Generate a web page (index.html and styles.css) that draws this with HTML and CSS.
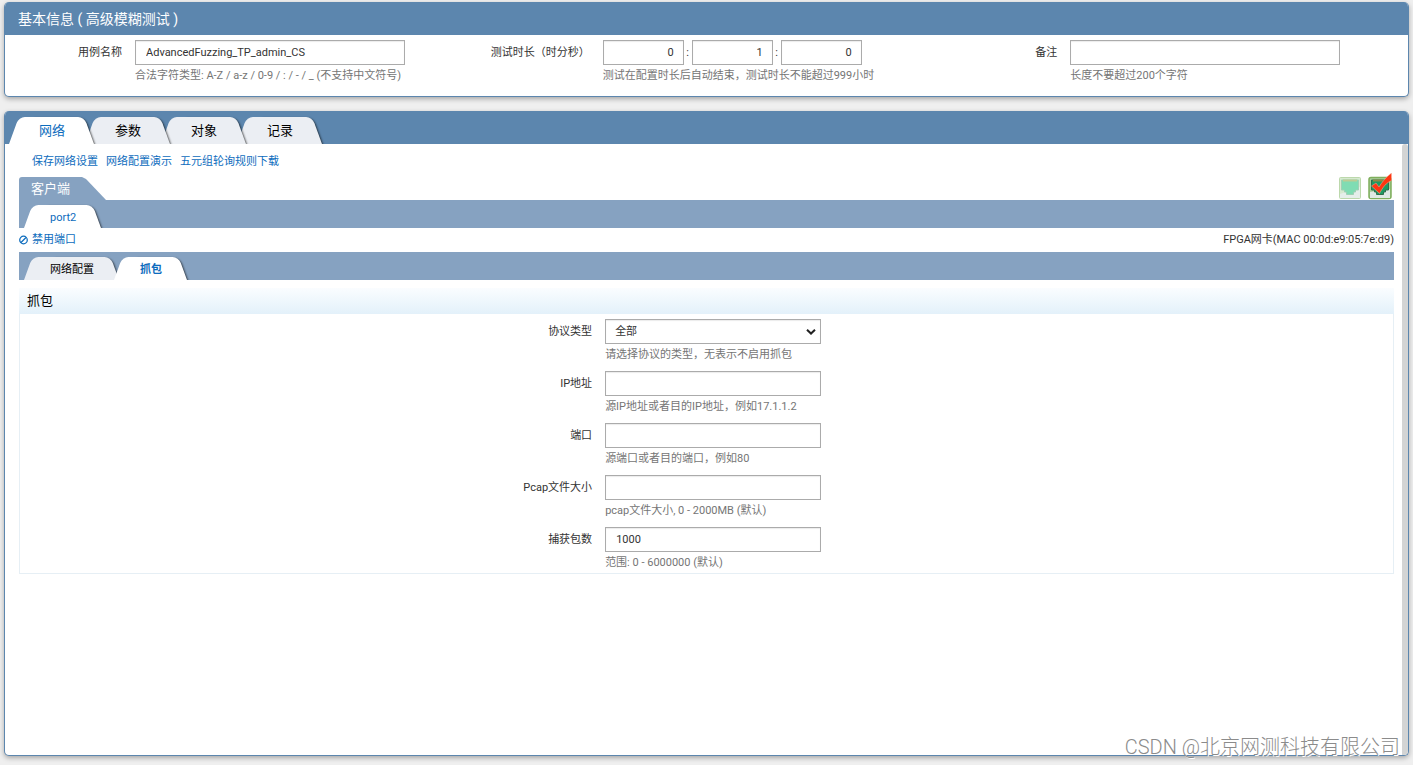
FILE: index.html
```html
<!DOCTYPE html>
<html lang="zh-CN">
<head>
<meta charset="utf-8">
<title>高级模糊测试</title>
<link rel="stylesheet" href="styles.css">
</head>
<body>
<section class="panel">
  <h1 class="panel-title">基本信息 ( 高级模糊测试 )</h1>
  <form class="info">
    <div class="info-field">
      <label class="label" for="case-name">用例名称</label>
      <div>
        <input class="box" id="case-name" type="text" value="AdvancedFuzzing_TP_admin_CS">
        <p class="hint">合法字符类型: A-Z / a-z / 0-9 / : / - / _ (不支持中文符号)</p>
      </div>
    </div>
    <div class="info-field">
      <label class="label" for="hours">测试时长（时分秒）</label>
      <div>
        <div class="duration">
          <input class="box number" id="hours" type="text" value="0"><span>:</span>
          <input class="box number" type="text" value="1" aria-label="分"><span>:</span>
          <input class="box number" type="text" value="0" aria-label="秒">
        </div>
        <p class="hint">测试在配置时长后自动结束，测试时长不能超过999小时</p>
      </div>
    </div>
    <div class="info-field">
      <label class="label" for="remark">备注</label>
      <div>
        <input class="box" id="remark" type="text">
        <p class="hint">长度不要超过200个字符</p>
      </div>
    </div>
  </form>
</section>

<section class="panel panel-main">
  <nav class="tabs tabs-top">
    <button class="tab active" type="button"><span>网络</span></button>
    <button class="tab" type="button"><span>参数</span></button>
    <button class="tab" type="button"><span>对象</span></button>
    <button class="tab" type="button"><span>记录</span></button>
  </nav>
  <div class="body">
    <main class="content">
      <div class="links">
        <a href="#">保存网络设置</a>
        <a href="#">网络配置演示</a>
        <a href="#">五元组轮询规则下载</a>
      </div>
      <div class="client-head">
        <h2 class="client-tab">客户端</h2>
        <div class="ports">
          <button class="port" type="button" aria-label="端口1">
            <svg width="24" height="27" viewBox="0 0 24 27">
              <rect x="1.500" y="4.500" width="21" height="21" rx="1" fill="#d6ead0" stroke="#bcd8ac"/>
              <path d="M2 21L22 14V25H2Z" fill="#e6eeea"/>
              <path d="M3.500 7H20.500V17H17.500V19H15.500V21.500H8.500V19H6.500V17H3.500Z" fill="#7fdcb3" stroke="#9fd0b4"/>
              <path d="M5 7.500H19" stroke="#bccb94" stroke-width="2"/>
            </svg>
          </button>
          <button class="port" type="button" aria-label="端口2">
            <svg width="24" height="27" viewBox="0 0 24 27">
              <rect x="1" y="4.500" width="22" height="21" rx="2" fill="#a9cf9c" stroke="#7fae5c" stroke-width="1.500"/>
              <path d="M2 19L22 16V25H2Z" fill="#dfe8e4"/>
              <path d="M3.500 7H20.500V17H17.500V19H15.500V21.500H8.500V19H6.500V17H3.500Z" fill="#1c9a63" stroke="#2f6e4c"/>
              <path d="M5 7.500H15" stroke="#8f8a45" stroke-width="2"/>
              <path d="M3.500 13L8 10L11 14C14 9 18 4 23.500 0V7.500C18 10 15 14 11.500 20.500Z" fill="#ff3511" stroke="#f3b7a4" stroke-width=".5"/>
            </svg>
          </button>
        </div>
      </div>
      <nav class="tabs tabs-sub">
        <button class="tab active" type="button"><span>port2</span></button>
      </nav>
      <div class="port-info">
        <a class="disable" href="#">
          <svg width="9" height="10" viewBox="0 0 10 10" fill="none" stroke="currentColor" stroke-width="1.400"><circle cx="5" cy="5" r="4.200"/><path d="M2.200 7.800L7.800 2.200"/></svg>
          禁用端口
        </a>
        <span>FPGA网卡(MAC 00:0d:e9:05:7e:d9)</span>
      </div>
      <nav class="tabs tabs-sub">
        <button class="tab" type="button"><span>网络配置</span></button>
        <button class="tab active strong" type="button"><span>抓包</span></button>
      </nav>
      <section class="capture">
        <h3 class="capture-title">抓包</h3>
        <form class="capture-form">
          <div class="row">
            <label class="label" for="protocol">协议类型</label>
            <div>
              <div class="select-wrap">
                <select class="box" id="protocol"><option>全部</option></select>
                <svg class="arrow" width="10" height="6" viewBox="0 0 10 6" fill="none" stroke="#222" stroke-width="2"><path d="M1 0.700L5 4.500L9 0.700"/></svg>
              </div>
              <p class="hint">请选择协议的类型，无表示不启用抓包</p>
            </div>
          </div>
          <div class="row">
            <label class="label" for="ip">IP地址</label>
            <div><input class="box" id="ip" type="text"><p class="hint">源IP地址或者目的IP地址，例如17.1.1.2</p></div>
          </div>
          <div class="row">
            <label class="label" for="port">端口</label>
            <div><input class="box" id="port" type="text"><p class="hint">源端口或者目的端口，例如80</p></div>
          </div>
          <div class="row">
            <label class="label" for="size">Pcap文件大小</label>
            <div><input class="box" id="size" type="text"><p class="hint">pcap文件大小, 0 - 2000MB (默认)</p></div>
          </div>
          <div class="row">
            <label class="label" for="count">捕获包数</label>
            <div><input class="box" id="count" type="text" value="1000"><p class="hint">范围: 0 - 6000000 (默认)</p></div>
          </div>
        </form>
      </section>
    </main>
    <div class="scrollbar"></div>
  </div>
</section>
<div class="watermark">CSDN @北京网测科技有限公司</div>
</body>
</html>
```
FILE: styles.css
```css
* { box-sizing: border-box; }
body {
  margin: 0;
  padding: 2px 4px 9px;
  min-height: 100vh;
  display: flex;
  flex-direction: column;
  gap: 14px;
  background: #efefef;
  color: #333;
  font: 11px/21px Roboto, "Noto Sans CJK SC", sans-serif;
}
h1, h2, h3, p { margin: 0; font-weight: 400; }
a { color: #0d6cbd; text-decoration: none; }
button { border: 0; padding: 0; background: none; font: inherit; cursor: pointer; }

.panel {
  border: 1px solid #5c86ae;
  border-top: 0;
  border-radius: 5px;
  background: #fff;
  overflow: hidden;
  box-shadow: 0 2px 5px rgba(0, 0, 0, .3);
}
.panel-main { flex: 1; display: flex; flex-direction: column; }
.panel-title {
  padding: 1px 13px 0;
  background: #5c86ae;
  color: #fff;
  font-size: 14px;
  line-height: 32px;
}

.info { display: grid; grid-template-columns: repeat(3, 1fr); padding: 5px 0 10px; }
.info-field { display: grid; grid-template-columns: 117px 270px; column-gap: 13px; }
.label { text-align: right; line-height: 25px; white-space: nowrap; }
.box {
  display: block;
  width: 100%;
  height: 25px;
  padding: 0 10px;
  border: 1px solid #ababab;
  border-radius: 0;
  background: #fff;
  box-shadow: inset 0 1px 1px rgba(0, 0, 0, .08);
  color: #333;
  font: inherit;
  outline: 0;
}
.hint { color: #757575; white-space: nowrap; }
.duration { display: flex; line-height: 25px; }
.duration span { width: 8px; flex: none; text-align: center; }
.number { width: 81px; text-align: right; padding: 0 9px; }

.tabs { display: flex; align-items: flex-end; overflow: hidden; }
.tabs-top { height: 33px; padding-left: 4px; background: #5c86ae; }
.tabs-sub { height: 28px; padding-left: 5px; background: #86a2c1; }
.tab { position: relative; flex: none; color: #000; }
.tabs-top .tab { height: 27px; padding: 0 30px; margin-right: -10px; font-size: 13px; }
.tabs-sub .tab { height: 23px; padding: 1px 26px 0; margin-right: -6px; }
.tab span { position: relative; z-index: 1; }
.tab::before, .tab::after {
  content: "";
  position: absolute;
  top: 0;
  bottom: 0;
  background: #ebeef3;
}
.tab::before {
  z-index: 1;
  left: 0;
  right: 40%;
  border-top-left-radius: 6px;
  transform: skewX(-20deg);
  transform-origin: bottom left;
}
.tab::after {
  left: 40%;
  right: 1px;
  border-top-right-radius: 6px;
  transform: skewX(20deg);
  transform-origin: bottom right;
  box-shadow: 1px 1px 2px rgba(0, 0, 0, .6);
}
.tab.active { z-index: 5; color: #0d6cbd; }
.tab.active::before, .tab.active::after { background: #fff; }
.tab:nth-child(1) { z-index: 4; }
.tab:nth-child(2) { z-index: 3; }
.tab:nth-child(3) { z-index: 2; }
.tab:nth-child(4) { z-index: 1; }
.tab.strong { z-index: 5; font-weight: 700; }

.body { flex: 1; display: flex; }
.content { flex: 1; padding: 0 8px 0 14px; }
.scrollbar { width: 6px; background: #d3d4d4; border-radius: 3px 3px 0 0; }
.links { display: flex; gap: 8px; padding: 2px 0 0 13px; line-height: 31px; }
.client-head { display: flex; justify-content: space-between; height: 23px; }
.client-tab {
  padding: 0 36px 0 12px;
  background: #86a2c1;
  border-top-left-radius: 3px;
  clip-path: polygon(0 0, calc(100% - 24px) 0, calc(100% - 20px) 2px, 100% 100%, 0 100%);
  color: #fff;
  font-size: 13px;
  line-height: 24px;
}
.ports { display: flex; align-items: flex-end; gap: 6px; padding-right: 2px; }
.port { display: flex; }
.port-info { display: flex; justify-content: space-between; line-height: 24px; }
.disable { display: flex; align-items: center; gap: 4px; }

.capture { margin-top: 8px; }
.capture-title {
  padding-left: 8px;
  background: linear-gradient(#fafdff, #e3f1fa);
  color: #000;
  font-size: 13px;
  line-height: 26px;
}
.capture-form {
  display: grid;
  gap: 6px;
  padding: 5px 0 0;
  border: 1px solid #e6eff5;
  border-top: 0;
}
.row { display: grid; grid-template-columns: 41.67% 216px; column-gap: 13px; }
.select-wrap { position: relative; }
.select-wrap .box { appearance: none; padding: 0 9px; }
.arrow { position: absolute; right: 5px; top: 10px; pointer-events: none; }

.watermark {
  position: absolute;
  right: 13px;
  bottom: 4px;
  color: #8b8b8b;
  font-size: 20px;
  font-weight: 300;
  line-height: 28px;
  text-shadow: 1px 1px 0 #fff;
}
```
